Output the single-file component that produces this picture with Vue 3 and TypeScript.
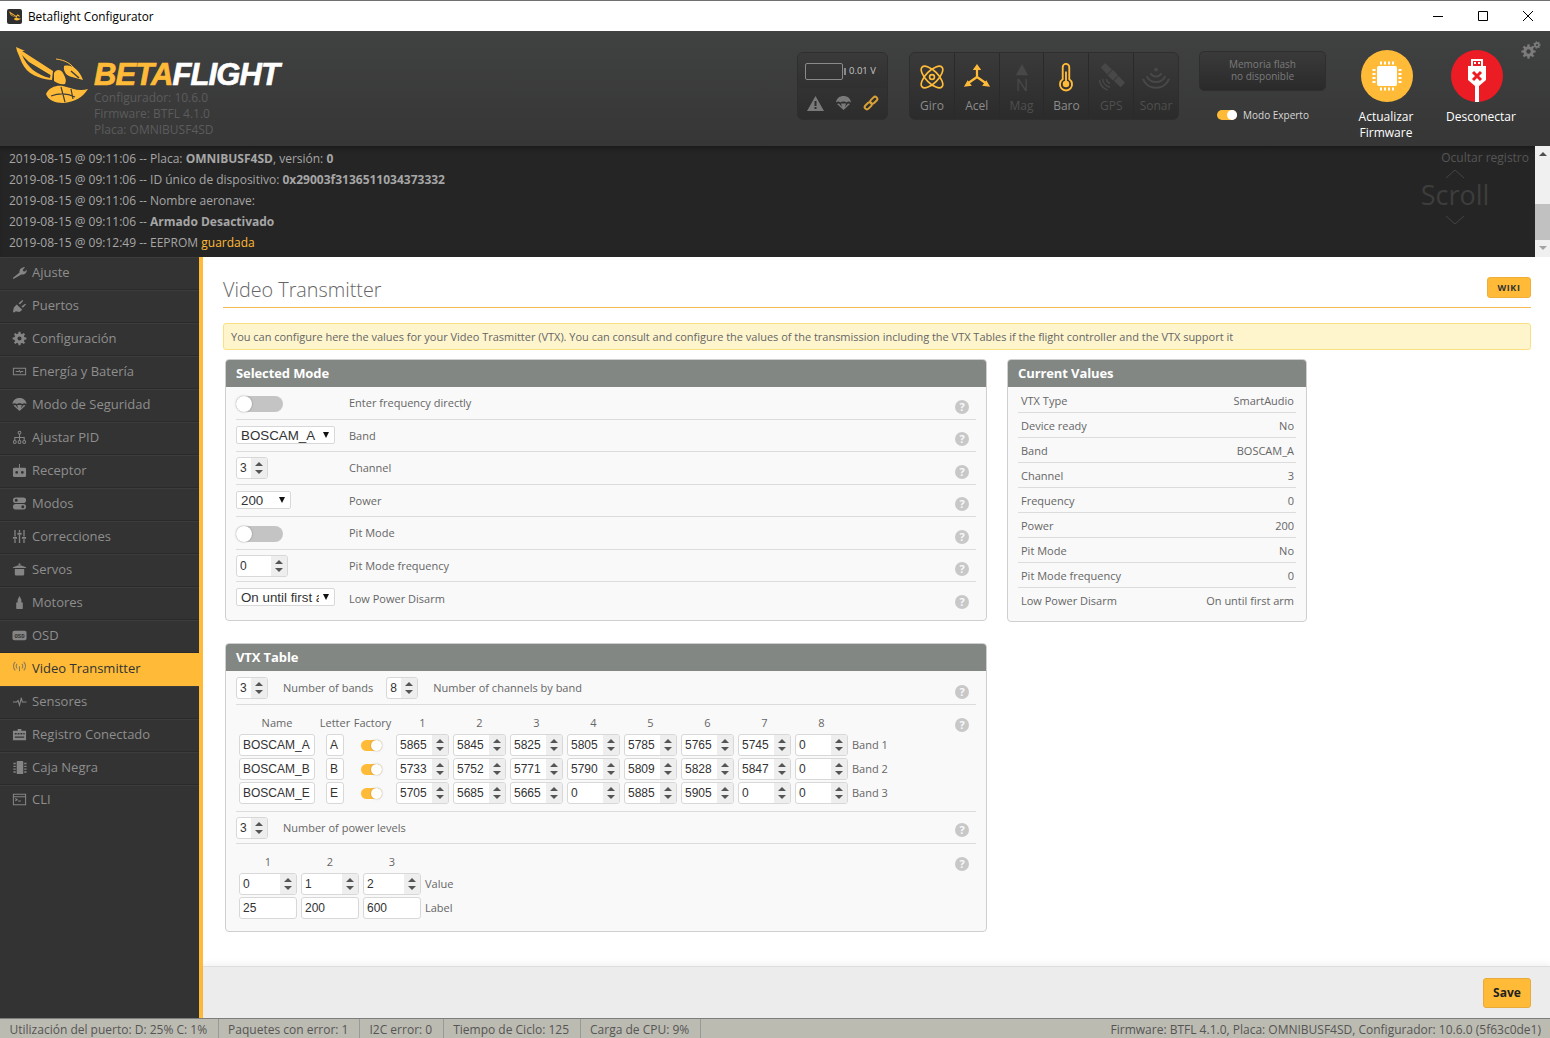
<template>
  <div class="app">
    <!-- window chrome -->
    <div class="titlebar">
      <span class="app-ico">
        <svg viewBox="14 45 74 58" width="12" height="10"><path :d="wingPath" fill="#ffbb38" fill-rule="evenodd" /><path :d="bodyPath" fill="#ffbb38" /></svg>
      </span>
      <span class="app-name">Betaflight Configurator</span>
      <div class="win-btns">
        <svg width="10" height="10" viewBox="0 0 10 10"><path d="M0 5.5h10" stroke="#000" /></svg>
        <svg width="10" height="10" viewBox="0 0 10 10"><path d="M.5.5h9v9h-9z" fill="none" stroke="#000" /></svg>
        <svg width="10" height="10" viewBox="0 0 10 10"><path d="M0 0l10 10M10 0L0 10" stroke="#000" /></svg>
      </div>
    </div>

    <header class="head">
      <div class="brand">
        <svg class="logo" viewBox="14 45 74 58">
          <path :d="wingPath" fill="#ffbb38" fill-rule="evenodd" />
          <path d="M30 61L50 73" stroke="#ffbb38" stroke-width="1.2" />
          <path :d="bodyPath" fill="#ffbb38" />
          <path d="M55 58C64 59 71 63 74 69" fill="none" stroke="#ffbb38" />
          <path d="M50 95C58 92 66 92 74 96M60 86L64 101M70 88L72 98" fill="none" stroke="#3c3d3d" stroke-width="1.2" />
          <path d="M70 70L78 77" stroke="#3c3d3d" stroke-width="1.5" />
        </svg>
        <div class="brand-txt">
          <div class="wordmark"><span class="beta">BETA</span>FLIGHT</div>
          <div class="ver">Configurador: 10.6.0</div>
          <div class="ver">Firmware: BTFL 4.1.0</div>
          <div class="ver">Placa: OMNIBUSF4SD</div>
        </div>
      </div>

      <div class="battery">
        <div class="bat-top">
          <span class="bat-cell"></span>
          <span class="bat-volt">0.01 V</span>
        </div>
        <div class="bat-bot">
          <svg width="17" height="15" viewBox="0 0 17 15"><path d="M8.5 0L17 15H0ZM7.5 5v5h2V5ZM7.5 11v2h2v-2Z" fill="#7a7a7a" fill-rule="evenodd" /></svg>
          <svg width="17" height="16" viewBox="0 0 16 16"><path :d="icons.gem" fill="#7a7a7a" /></svg>
          <svg width="16" height="16" viewBox="0 0 16 16"><g fill="none" stroke="#d9a036" stroke-width="2"><rect x="-4" y="-2.2" width="8" height="4.4" rx="2.2" transform="translate(5.2 10.8) rotate(-45)" /><rect x="-4" y="-2.2" width="8" height="4.4" rx="2.2" transform="translate(10.8 5.2) rotate(-45)" /></g></svg>
        </div>
      </div>

      <div class="sensors">
        <div class="sensor on">
          <svg viewBox="0 0 30 30"><g fill="none" stroke="currentColor" stroke-width="1.8"><ellipse cx="15" cy="15" rx="15" ry="6.5" transform="rotate(45 15 15)" /><ellipse cx="15" cy="15" rx="15" ry="6.5" transform="rotate(-45 15 15)" /><circle cx="15" cy="15" r="2.6" /></g></svg>
          <span>Giro</span>
        </div>
        <div class="sensor on">
          <svg viewBox="0 0 30 30"><path d="M15 15V5M15 15L5 22M15 15L25 22" fill="none" stroke="currentColor" stroke-width="2.4" /><path d="M15 1l4.5 6.5h-9zM1 25.5l4-7 4.5 6zM29 25.5l-8.5-1 4.5-6z" fill="currentColor" /></svg>
          <span>Acel</span>
        </div>
        <div class="sensor">
          <svg viewBox="0 0 30 30"><path d="M15 1l6.5 12h-13z" fill="currentColor" /><text x="15" y="30" text-anchor="middle" class="mag-n">N</text></svg>
          <span>Mag</span>
        </div>
        <div class="sensor on">
          <svg viewBox="0 0 30 30"><path d="M11.5 4.5a3.5 3.5 0 0 1 7 0v13a6.5 6.5 0 1 1-7 0z" fill="none" stroke="currentColor" stroke-width="2" /><circle cx="15" cy="22.5" r="3.5" fill="currentColor" /><path d="M15 9v12" stroke="currentColor" stroke-width="2" /></svg>
          <span>Baro</span>
        </div>
        <div class="sensor">
          <svg viewBox="0 0 30 30"><g fill="currentColor" transform="rotate(45 17 13)"><rect x="13" y="9" width="8" height="8" /><rect x="2" y="9.5" width="10" height="7" /><rect x="22" y="9.5" width="10" height="7" /></g><path d="M10 17a6 6 0 0 0 4 5M6 17a10 10 0 0 0 8 9M2.5 18a14 14 0 0 0 9 11" fill="none" stroke="currentColor" stroke-width="1.5" /></svg>
          <span>GPS</span>
        </div>
        <div class="sensor">
          <svg viewBox="0 0 30 30"><circle cx="15" cy="7" r="2" fill="currentColor" /><path d="M9 11a7 7 0 0 0 12 0M5 14a11 11 0 0 0 20 0M1 17a15 15 0 0 0 28 0" fill="none" stroke="currentColor" stroke-width="2.2" /></svg>
          <span>Sonar</span>
        </div>
      </div>

      <div class="flash-col">
        <div class="flash">Memoria flash<br />no disponible</div>
        <div class="expert">
          <span class="tgl-on"><i></i></span>
          <span>Modo Experto</span>
        </div>
      </div>

      <div class="round-btn">
        <span class="circle fw">
          <svg width="36" height="36" viewBox="0 0 36 36"><rect x="8" y="8" width="20" height="20" rx="2" fill="#fff" /><path d="M12 3.5v3M16 3.5v3M20 3.5v3M24 3.5v3M12 29.5v3M16 29.5v3M20 29.5v3M24 29.5v3M3.5 12h3M3.5 16h3M3.5 20h3M3.5 24h3M29.5 12h3M29.5 16h3M29.5 20h3M29.5 24h3" stroke="#fff" stroke-width="2" /></svg>
        </span>
        <span class="round-lbl">Actualizar<br />Firmware</span>
      </div>
      <div class="round-btn disc">
        <span class="circle off">
          <svg width="52" height="52" viewBox="0 0 52 52"><path d="M20 9h12v7h3v14l-7 6v16h-4V36l-7-6V16h3zM22 11v5h8v-5zM23 12h2v2h-2zM27 12h2v2h-2z" fill="#fff" fill-rule="evenodd" /><path d="M22 22l8 8M30 22l-8 8" stroke="#ec1c24" stroke-width="3" /></svg>
        </span>
        <span class="round-lbl">Desconectar</span>
      </div>
      <svg class="cog" width="20" height="18" viewBox="0 0 20 18">
        <path :d="gearPath(7.5, 10.5, 7.2, 5.2, 8, 2.2)" fill="#7b7b7b" fill-rule="evenodd" />
        <path :d="gearPath(16, 4, 3.8, 2.8, 7, 1.1)" fill="#7b7b7b" fill-rule="evenodd" />
      </svg>
    </header>

    <section class="log">
      <div class="log-lines">
        <div>2019-08-15 @ 09:11:06 -- Placa: <b>OMNIBUSF4SD</b>, versión: <b>0</b></div>
        <div>2019-08-15 @ 09:11:06 -- ID único de dispositivo: <b>0x29003f3136511034373332</b></div>
        <div>2019-08-15 @ 09:11:06 -- Nombre aeronave:</div>
        <div>2019-08-15 @ 09:11:06 -- <b>Armado Desactivado</b></div>
        <div>2019-08-15 @ 09:12:49 -- EEPROM <span class="saved">guardada</span></div>
      </div>
      <div class="log-side">
        <div class="hide-log">Ocultar registro</div>
        <div class="scroll-hint">
          <svg width="20" height="10" viewBox="0 0 20 10"><path d="M1 9l9-8 9 8" fill="none" stroke="#444" /></svg>
          <div class="scroll-word">Scroll</div>
          <svg width="20" height="10" viewBox="0 0 20 10"><path d="M1 1l9 8 9-8" fill="none" stroke="#444" /></svg>
        </div>
      </div>
      <div class="scrollbar">
        <i class="sb-up"></i>
        <span class="sb-thumb"></span>
        <i class="sb-down"></i>
      </div>
    </section>

    <div class="main">
      <nav class="side">
        <div v-for="m in menu" :key="m.label" class="nav-item" :class="{ active: m.label === 'Video Transmitter' }">
          <svg class="nav-ico" viewBox="0 0 16 16">
            <template v-if="m.label === 'OSD'">
              <rect x="0.5" y="3" width="15" height="10" rx="2" fill="currentColor" />
              <text x="8" y="10.3" text-anchor="middle" class="osd-txt">OSD</text>
            </template>
            <path v-else-if="m.stroke" :d="m.d" fill="none" stroke="currentColor" stroke-width="1.1" />
            <path v-else :d="m.d" fill="currentColor" fill-rule="evenodd" />
          </svg>
          <span>{{ m.label }}</span>
        </div>
      </nav>

      <div class="page">
        <div class="content">
          <div class="tab-head">
            <h1>Video Transmitter</h1>
            <span class="wiki">WIKI</span>
          </div>
          <div class="note">You can configure here the values for your Video Trasmitter (VTX). You can consult and configure the values of the transmission including the VTX Tables if the flight controller and the VTX support it</div>

          <div class="columns">
            <div class="col-left">
              <div class="panel">
                <div class="panel-head">Selected Mode</div>
                <div class="mode-row">
                  <div class="ctl"><span class="tgl-off"><i></i></span></div>
                  <span class="lbl">Enter frequency directly</span>
                  <span class="help">?</span>
                </div>
                <div class="mode-row">
                  <div class="ctl"><div class="sel w99"><span>BOSCAM_A</span><i></i></div></div>
                  <span class="lbl">Band</span>
                  <span class="help">?</span>
                </div>
                <div class="mode-row">
                  <div class="ctl"><div class="num w32"><span>3</span><b class="spin"></b></div></div>
                  <span class="lbl">Channel</span>
                  <span class="help">?</span>
                </div>
                <div class="mode-row">
                  <div class="ctl"><div class="sel w55"><span>200</span><i></i></div></div>
                  <span class="lbl">Power</span>
                  <span class="help">?</span>
                </div>
                <div class="mode-row">
                  <div class="ctl"><span class="tgl-off"><i></i></span></div>
                  <span class="lbl">Pit Mode</span>
                  <span class="help">?</span>
                </div>
                <div class="mode-row">
                  <div class="ctl"><div class="num w52"><span>0</span><b class="spin"></b></div></div>
                  <span class="lbl">Pit Mode frequency</span>
                  <span class="help">?</span>
                </div>
                <div class="mode-row last">
                  <div class="ctl"><div class="sel w99"><span>On until first arm</span><i></i></div></div>
                  <span class="lbl">Low Power Disarm</span>
                  <span class="help">?</span>
                </div>
              </div>

              <div class="panel">
                <div class="panel-head">VTX Table</div>
                <div class="vtx-top">
                  <div class="num w32"><span>3</span><b class="spin"></b></div>
                  <span class="lbl wide">Number of bands</span>
                  <div class="num w32"><span>8</span><b class="spin"></b></div>
                  <span class="lbl wide">Number of channels by band</span>
                  <span class="help">?</span>
                </div>
                <div class="vtx-mid">
                  <div class="bands">
                    <span class="hc name">Name</span>
                    <span class="hc letter">Letter</span>
                    <span class="hc fact">Factory</span>
                    <span v-for="c in 8" :key="c" class="hc ch">{{ c }}</span>
                    <span></span>
                    <template v-for="(b, i) in bands" :key="b.name">
                      <div class="txt name">{{ b.name }}</div>
                      <div class="txt letter">{{ b.letter }}</div>
                      <span class="tgl-mini"><i></i></span>
                      <div v-for="(f, j) in b.freqs" :key="j" class="num ch"><span>{{ f }}</span><b class="spin"></b></div>
                      <span class="lbl">Band {{ i + 1 }}</span>
                    </template>
                  </div>
                  <span class="help top">?</span>
                </div>
                <div class="vtx-levels">
                  <div class="num w32"><span>3</span><b class="spin"></b></div>
                  <span class="lbl wide">Number of power levels</span>
                  <span class="help low">?</span>
                </div>
                <div class="vtx-power">
                  <div class="powers">
                    <span v-for="c in 3" :key="c" class="hc pw">{{ c }}</span>
                    <span></span>
                    <div v-for="v in 3" :key="v" class="num pw"><span>{{ v - 1 }}</span><b class="spin"></b></div>
                    <span class="lbl">Value</span>
                    <div v-for="l in powerLabels" :key="l" class="txt pw">{{ l }}</div>
                    <span class="lbl">Label</span>
                  </div>
                  <span class="help top">?</span>
                </div>
              </div>
            </div>

            <div class="panel current">
              <div class="panel-head">Current Values</div>
              <div class="cur-list">
                <div v-for="r in current" :key="r[0]" class="cur-row">
                  <span>{{ r[0] }}</span>
                  <span>{{ r[1] }}</span>
                </div>
              </div>
            </div>
          </div>
        </div>
        <div class="toolbar">
          <span class="save">Save</span>
        </div>
      </div>
    </div>

    <footer class="status">
      <span class="st">Utilización del puerto: D: 25% C: 1%</span>
      <span class="st">Paquetes con error: 1</span>
      <span class="st">I2C error: 0</span>
      <span class="st">Tiempo de Ciclo: 125</span>
      <span class="st">Carga de CPU: 9%</span>
      <span class="st-right">Firmware: BTFL 4.1.0, Placa: OMNIBUSF4SD, Configurador: 10.6.0 (5f63c0de1)</span>
    </footer>
  </div>
</template>

<script setup lang="ts">
// builds a gear outline, hole is wound into the same path for evenodd
function gearPath(cx: number, cy: number, outer: number, inner: number, teeth: number, hole: number): string {
  const pts: string[] = [];
  const step = (Math.PI * 2) / teeth;
  for (let i = 0; i < teeth; i++) {
    const a = i * step;
    const spots: Array<[number, number]> = [
      [a - step * 0.32, inner],
      [a - step * 0.18, outer],
      [a + step * 0.18, outer],
      [a + step * 0.32, inner],
    ];
    for (const [ang, r] of spots) {
      pts.push(`${(cx + Math.cos(ang) * r).toFixed(2)} ${(cy + Math.sin(ang) * r).toFixed(2)}`);
    }
  }
  return `M${pts.join('L')}Z${circle(cx, cy, hole)}`;
}

function circle(x: number, y: number, r: number): string {
  return `M${x - r} ${y}a${r} ${r} 0 1 0 ${r * 2} 0a${r} ${r} 0 1 0 ${-r * 2} 0Z`;
}

const wingPath =
  'M15 46L24 50L21 50L52 70L51 79C38 78 26 73 21 62L16 50ZM21 54C26 66 36 74 49 77L49.5 74L28 61Z';
const bodyPath =
  'M63 65C70 63 78 68 82 79L71 76C66 75 62 71 63 65ZM53 72C55 68 60 68 62 72C64 76 66 79 64 83C60 84 56 82 53 80ZM45 93C48 86 56 84 62 85C70 87 78 91 87 88C82 96 74 101 62 102C54 102 47 99 45 93Z';

const icons = {
  gem: 'M.5 7.5C1 3 4.5 1 8 1s7 2 7.5 6.5C14 6.3 12.3 6.3 11 7.5 9.7 6.3 6.3 6.3 5 7.5 3.7 6.3 2 6.3 .5 7.5ZM1.5 9L8 15l6.5-6-2-.5L9.5 12l1-3.5h-5l1 3.5-3-3.5Z',
};

interface MenuItem {
  label: string;
  d: string;
  stroke?: boolean;
}

const menu: MenuItem[] = [
  { label: 'Ajuste', d: 'M1.5 15L.8 13.8 8 8C7.6 5 10 2.2 14 2.5L11.5 5 12 6.6 13.8 7 15.8 4.8C16 8.5 13 10.8 10 10Z' },
  { label: 'Puertos', d: 'M1 15l1-5 3-3 6 5.5L8 15l-4-1-1.5 1.5ZM7 5.5L11 2l1 1-3.5 4ZM10 9l4-3 1 1-3.5 3.5Z' },
  { label: 'Configuración', d: gearPath(8, 8, 7.4, 5.4, 8, 2.2) },
  { label: 'Energía y Batería', d: 'M1.5 4.5h13v7h-13zM4 8h3l1-1 1 2 1-1h2', stroke: true },
  { label: 'Modo de Seguridad', d: icons.gem },
  { label: 'Ajustar PID', d: `M8 4.3V8M3 11V8h10v3M8 8v3${circle(8, 2.8, 1.5)}${circle(3, 12.8, 1.5)}${circle(8, 12.8, 1.5)}${circle(13, 12.8, 1.5)}`, stroke: true },
  { label: 'Receptor', d: `M7.5 1h1v4h-1zM2.5 5h11A1.5 1.5 0 0 1 15 6.5v7a1.5 1.5 0 0 1-1.5 1.5h-11A1.5 1.5 0 0 1 1 13.5v-7A1.5 1.5 0 0 1 2.5 5Z${circle(5, 10, 1.5)}${circle(11, 10, 1.5)}` },
  { label: 'Modos', d: `M4 1.5h8a3 3 0 0 1 0 6H4a3 3 0 0 1 0-6Z${circle(4.5, 4.5, 1.6)}M4 8.5h8a3 3 0 0 1 0 6H4a3 3 0 0 1 0-6Z${circle(11.5, 11.5, 1.6)}` },
  { label: 'Correcciones', d: 'M2.5 1h1.4v7H2.5zM1 8.5h4.4v2H1zM2.5 11h1.4v4H2.5zM7.3 1h1.4v2.5H7.3zM5.8 4h4.4v2H5.8zM7.3 6.5h1.4V15H7.3zM12.1 1h1.4v7h-1.4zM10.6 8.5H15v2h-4.4zM12.1 11h1.4v4h-1.4z' },
  { label: 'Servos', d: 'M7 1.5h2v2H7zM1 5.5L6 3.8h4l5 1.7v1H1zM3 7.5h10V13a1.5 1.5 0 0 1-1.5 1.5h-7A1.5 1.5 0 0 1 3 13Z' },
  { label: 'Motores', d: 'M8 1l2 4v3h1.5v6a1 1 0 0 1-1 1h-5a1 1 0 0 1-1-1V8H6V5Z' },
  { label: 'OSD', d: '' },
  { label: 'Video Transmitter', d: 'M8 5.5V11M5.5 3a3.5 3.5 0 0 0 0 5M10.5 3a3.5 3.5 0 0 1 0 5M3.5 1a6.3 6.3 0 0 0 0 9M12.5 1a6.3 6.3 0 0 1 0 9', stroke: true },
  { label: 'Sensores', d: 'M1 8.5h4l1.5-1.5 1.5 5 2-8 1 4.5h4.5', stroke: true },
  { label: 'Registro Conectado', d: 'M6 2h4v2H6zM1 4h14v10H1zM3 6.5h2V8H3zM6 6.5h2V8H6zM9 6.5h2V8H9zM12 6.5h1.5V8H12zM3 10h10v1.5H3z' },
  { label: 'Caja Negra', d: 'M6 1h5a1 1 0 0 1 1 1v12a1 1 0 0 1-1 1H6a1 1 0 0 1-1-1V2a1 1 0 0 1 1-1ZM1.5 3H4v1.5H1.5zM1.5 6H4v1.5H1.5zM1.5 9H4v1.5H1.5zM1.5 12H4v1.5H1.5zM13 3h2.5v1.5H13zM13 6h2.5v1.5H13zM13 9h2.5v1.5H13zM13 12h2.5v1.5H13z' },
  { label: 'CLI', d: 'M1.5 2.5h13v11h-13zM1.5 5h13M3.5 7l2 1.2-2 1.2M6.5 9.5h3', stroke: true },
];

const bands = [
  { name: 'BOSCAM_A', letter: 'A', freqs: [5865, 5845, 5825, 5805, 5785, 5765, 5745, 0] },
  { name: 'BOSCAM_B', letter: 'B', freqs: [5733, 5752, 5771, 5790, 5809, 5828, 5847, 0] },
  { name: 'BOSCAM_E', letter: 'E', freqs: [5705, 5685, 5665, 0, 5885, 5905, 0, 0] },
];

const powerLabels = [25, 200, 600];

const current: Array<[string, string]> = [
  ['VTX Type', 'SmartAudio'],
  ['Device ready', 'No'],
  ['Band', 'BOSCAM_A'],
  ['Channel', '3'],
  ['Frequency', '0'],
  ['Power', '200'],
  ['Pit Mode', 'No'],
  ['Pit Mode frequency', '0'],
  ['Low Power Disarm', 'On until first arm'],
];
</script>

<style>
html, body { margin: 0; overflow: hidden; }
</style>

<style scoped>
.app {
  width: 1550px;
  height: 1038px;
  display: flex;
  flex-direction: column;
  font-family: "Open Sans", "Noto Sans", sans-serif;
  background: #fff;
  overflow: hidden;
}

/* window chrome */
.titlebar {
  height: 31px;
  box-sizing: border-box;
  border-top: 1px solid #707070;
  display: flex;
  align-items: center;
  padding-left: 7px;
  background: #fff;
  flex-shrink: 0;
}
.app-ico {
  width: 15px;
  height: 15px;
  background: #2f2f2f;
  border-radius: 2px;
  display: flex;
  align-items: center;
  justify-content: center;
}
.app-name { font-size: 11.8px; margin-left: 6px; color: #000; }
.win-btns { margin-left: auto; margin-right: 17px; display: flex; gap: 35px; }

/* header */
.head {
  height: 115px;
  flex-shrink: 0;
  background: linear-gradient(#404141, #363636);
  display: flex;
  align-items: flex-start;
}
.brand { display: flex; margin-left: 15px; width: 782px; }
.logo { width: 74px; height: 58px; margin-top: 15px; }
.brand-txt { margin-left: 5px; margin-top: 28px; }
.wordmark {
  font-family: "Liberation Sans", sans-serif;
  font-weight: 700;
  font-style: italic;
  font-size: 31px;
  line-height: 31px;
  letter-spacing: -0.9px;
  margin-bottom: 0;
  color: #fff;
  -webkit-text-stroke: 0.7px currentColor;
}
.beta { color: #ffbb38; }
.ver { font-size: 12px; line-height: 16px; color: #5c5c5c; }

.battery {
  width: 91px;
  height: 68px;
  margin-top: 21px;
  box-sizing: border-box;
  border: 1px solid #2e2e2e;
  border-radius: 6px;
  overflow: hidden;
  background: linear-gradient(#3a3a3a, #2c2c2c);
}
.bat-top {
  height: 35px;
  display: flex;
  align-items: center;
  padding-left: 7px;
  background: linear-gradient(#3a3a3a, #303030);
}
.bat-cell {
  width: 36px;
  height: 15px;
  margin-top: 1px;
  border: 1.5px solid #8a8a8a;
  border-radius: 2px;
  position: relative;
}
.bat-cell::after {
  content: '';
  position: absolute;
  right: -3.5px;
  top: 4px;
  width: 2px;
  height: 7px;
  background: #8a8a8a;
}
.bat-volt { font-size: 9.5px; color: #c4c4c4; margin-left: 6px; }
.bat-bot {
  display: flex;
  align-items: center;
  gap: 11px;
  padding: 7px 0 0 9px;
}

.sensors {
  margin-left: 21px;
  margin-top: 21px;
  height: 68px;
  width: 270px;
  box-sizing: border-box;
  display: flex;
  border: 1px solid #2e2e2e;
  border-radius: 6px;
  overflow: hidden;
  background: linear-gradient(#3a3a3a, #2b2b2b);
}
.sensor {
  flex: 1;
  border-right: 1px solid #2a2a2a;
  display: flex;
  flex-direction: column;
  align-items: center;
  color: #484848;
  font-size: 12px;
}
.sensor:last-child { border-right: none; }
.sensor svg { width: 28px; height: 28px; margin-top: 10px; overflow: visible; }
.sensor span { margin-top: 7px; line-height: 16px; color: #4f4f4f; }
.sensor.on { color: #ffbb38; }
.sensor.on span { color: #8c8c8c; }
.mag-n { font-family: "Open Sans", sans-serif; font-size: 18px; fill: currentColor; }

.flash-col { margin-left: 20px; width: 127px; margin-top: 20px; }
.flash {
  height: 40px;
  box-sizing: border-box;
  border: 1px solid #2e2e2e;
  border-radius: 5px;
  background: linear-gradient(#3a3a3a, #2a2a2a);
  font-size: 10px;
  line-height: 12px;
  color: #7b7b7b;
  text-align: center;
  padding-top: 6px;
}
.expert {
  display: flex;
  align-items: center;
  gap: 6px;
  margin: 17px 0 0 18px;
  font-size: 10px;
  color: #d8d8d8;
}
.tgl-on {
  width: 20px;
  height: 10px;
  background: #ffbb38;
  border-radius: 5px;
  display: flex;
  justify-content: flex-end;
}
.tgl-on i {
  width: 10px;
  height: 10px;
  background: #fff;
  border-radius: 50%;
}

.round-btn {
  width: 70px;
  margin-left: 25px;
  margin-top: 19px;
  display: flex;
  flex-direction: column;
  align-items: center;
}
.round-btn.disc { align-items: flex-start; }
.circle {
  width: 52px;
  height: 52px;
  border-radius: 50%;
  display: flex;
  align-items: center;
  justify-content: center;
}
.circle.fw { background: #ffbb38; margin-left: 2px; }
.circle.off { background: #ec1c24; margin-left: 5px; }
.round-lbl {
  margin-top: 7px;
  font-size: 12px;
  line-height: 16px;
  color: #fff;
  text-align: center;
  white-space: nowrap;
}
.cog { margin: 10px 0 0 5px; }

/* log */
.log {
  height: 111px;
  flex-shrink: 0;
  background: #252525;
  box-shadow: inset 0 5px 5px -3px rgba(0, 0, 0, 0.35);
  display: flex;
  font-size: 12px;
  color: #a6a6a6;
}
.log-lines { flex: 1; padding: 2px 0 0 9px; line-height: 21px; }
.log-lines b { font-weight: 700; color: #a6a6a6; }
.saved { color: #ffbb38; }
.log-side { width: 113px; }
.hide-log { text-align: right; padding-right: 6px; margin-top: 4px; line-height: 16px; color: #555; }
.scroll-hint {
  width: 66px;
  display: flex;
  flex-direction: column;
  align-items: center;
  margin-top: 3px;
}
.scroll-word { font-size: 27px; line-height: 32px; color: #3d3d3d; }
.scroll-hint svg:last-child { margin-top: 4px; }
.scrollbar {
  width: 15px;
  background: #f0f0f0;
  display: flex;
  flex-direction: column;
  align-items: center;
}
.sb-up, .sb-down { width: 0; height: 0; border-left: 4px solid transparent; border-right: 4px solid transparent; }
.sb-up { border-bottom: 4px solid #505050; margin-top: 6px; }
.sb-down { border-top: 4px solid #a3a3a3; margin-top: 6px; }
.sb-thumb { width: 15px; height: 36px; background: #c1c1c1; margin-top: 48px; }

/* body */
.main { flex: 1; min-height: 0; display: flex; }
.side {
  width: 199px;
  box-sizing: border-box;
  background: #333;
  flex-shrink: 0;
}
.nav-item {
  height: 33px;
  box-sizing: border-box;
  border-bottom: 1px solid #2a2a2a;
  border-top: 1px solid #3c3c3c;
  display: flex;
  align-items: center;
  padding-left: 12px;
  padding-bottom: 3px;
  font-size: 13px;
  color: #8e8e8e;
}
.nav-item:last-child { height: 32px; border-bottom: none; padding-bottom: 5px; }
.nav-item.active { background: #ffbb38; color: #333; border-color: #ffbb38; }
.nav-item.active .nav-ico { color: #8a7b55; }
.nav-ico { width: 15px; height: 15px; margin-right: 5px; color: #858585; flex-shrink: 0; }
.osd-txt { font-family: "Liberation Mono", monospace; font-size: 6px; font-weight: 700; fill: #333; }

.page {
  flex: 1;
  min-width: 0;
  border-left: 4px solid #ffbb38;
  display: flex;
  flex-direction: column;
}
.content { flex: 1; min-height: 0; padding: 0 19px 0 20px; background: #fff; }
.tab-head {
  height: 51px;
  box-sizing: border-box;
  display: flex;
  align-items: center;
  justify-content: space-between;
  border-bottom: 1px solid #f5b94f;
  padding-top: 15px;
  padding-bottom: 1px;
}
.tab-head h1 {
  margin: 0;
  font-size: 19.8px;
  font-weight: 300;
  color: #666;
}
.wiki {
  width: 44px;
  height: 21px;
  margin-top: -3px;
  background: #ffbb38;
  border: 1px solid #efb03a;
  box-sizing: border-box;
  border-radius: 3px;
  font-size: 9px;
  font-weight: 700;
  letter-spacing: 0.6px;
  color: #333;
  display: flex;
  align-items: center;
  justify-content: center;
}
.note {
  margin-top: 15px;
  height: 27px;
  box-sizing: border-box;
  background: #fef5cd;
  border: 1px solid #fbe083;
  border-radius: 3px;
  padding-left: 7px;
  font-size: 11px;
  letter-spacing: -0.015px;
  line-height: 25px;
  color: #666;
  white-space: nowrap;
}
.columns { display: flex; align-items: flex-start; gap: 20px; margin: 9px 0 0 2px; }
.col-left { width: 762px; display: flex; flex-direction: column; gap: 22.5px; }

.panel {
  box-sizing: border-box;
  background: #f9f9f9;
  border: 1px solid #cfcfcf;
  border-radius: 4px;
  overflow: hidden;
}
.panel-head {
  height: 27px;
  background: #828784;
  color: #fff;
  font-size: 13px;
  font-weight: 700;
  letter-spacing: -0.1px;
  line-height: 27px;
  padding-left: 10px;
}
.panel.current { width: 300px; }

.lbl { font-size: 11px; color: #666; white-space: nowrap; }
.lbl.wide { margin-left: 15px; }
.help {
  width: 14px;
  height: 14px;
  border-radius: 50%;
  background: #c8c8c8;
  color: #f9f9f9;
  font-size: 11px;
  font-weight: 700;
  line-height: 14px;
  text-align: center;
  margin-left: auto;
  margin-right: 7px;
  margin-top: 8px;
  flex-shrink: 0;
}
.help.top { align-self: flex-start; margin-top: 2px; }
.help.low { margin-top: 5px; }

.mode-row {
  height: 32.5px;
  box-sizing: border-box;
  margin: 0 10px;
  border-bottom: 1px solid #dcdcdc;
  display: flex;
  align-items: center;
}
.mode-row .num { margin-top: 1px; }
.mode-row.last { height: 37.5px; border-bottom: none; padding-bottom: 7px; }
.mode-row.last .lbl, .mode-row.last .help { position: relative; top: 1px; }
.ctl { width: 113px; flex-shrink: 0; display: flex; }

.tgl-off {
  width: 47px;
  height: 16px;
  margin-top: 3px;
  background: #c4c4c4;
  border-radius: 8px;
  display: block;
}
.tgl-off i {
  display: block;
  width: 16px;
  height: 16px;
  background: #fff;
  border-radius: 50%;
  box-shadow: 0 0 2px rgba(0, 0, 0, 0.35);
}

.sel {
  height: 18px;
  box-sizing: border-box;
  background: #fff;
  border: 1px solid #d8d8d8;
  border-radius: 2px;
  display: flex;
  align-items: center;
  padding-left: 4px;
  font-family: "Liberation Sans", sans-serif;
  font-size: 13.33px;
  color: #333;
  overflow: hidden;
}
.sel span { flex: 1; min-width: 0; overflow: hidden; white-space: nowrap; }
.sel i {
  width: 0;
  height: 0;
  border-left: 3.5px solid transparent;
  border-right: 3.5px solid transparent;
  border-top: 6px solid #111;
  margin: 0 5px 0 4px;
  flex-shrink: 0;
}
.w99 { width: 99px; }
.w55 { width: 55px; }

.num, .txt {
  height: 22px;
  box-sizing: border-box;
  background: #fff;
  border: 1px solid #d8d8d8;
  border-radius: 3px;
  font-family: "Liberation Sans", sans-serif;
  font-size: 12px;
  color: #333;
}
.num { display: flex; overflow: hidden; }
.num span { flex: 1; min-width: 0; padding-left: 3px; line-height: 20px; }
.txt { padding-left: 3px; line-height: 20px; }
.spin {
  width: 16px;
  background: #eee;
  display: flex;
  flex-direction: column;
  align-items: center;
  justify-content: center;
  gap: 4px;
  flex-shrink: 0;
}
.spin::before, .spin::after {
  content: '';
  width: 0;
  height: 0;
  border-left: 4px solid transparent;
  border-right: 4px solid transparent;
}
.spin::before { border-bottom: 4px solid #555; }
.spin::after { border-top: 4px solid #555; }
.w32 { width: 32px; flex-shrink: 0; }
.w52 { width: 52px; }

.vtx-top {
  height: 34px;
  box-sizing: border-box;
  margin: 0 10px;
  border-bottom: 1px solid #dcdcdc;
  display: flex;
  align-items: center;
}
.vtx-top .num { margin-top: 1px; }
.vtx-top .lbl + .num { margin-left: 13px; }
.vtx-mid {
  height: 107px;
  box-sizing: border-box;
  margin: 0 10px;
  padding: 11px 0 0 3px;
  border-bottom: 1px solid #dcdcdc;
  display: flex;
}
.bands {
  display: grid;
  grid-template-columns: 87px 35px 35px repeat(8, 57px) auto;
  grid-template-rows: 16px repeat(3, 22px);
  row-gap: 2px;
  align-items: center;
}
.bands .hc { height: 14px; line-height: 14px; align-self: start; }
.bands .lbl, .powers .lbl { padding-bottom: 2px; }
.hc {
  font-size: 11px;
  color: #666;
  display: flex;
  justify-content: center;
  white-space: nowrap;
}
.name { width: 76px; }
.letter { width: 18px; }
.fact { width: 23px; }
.ch { width: 53px; }
.tgl-mini {
  width: 21px;
  height: 11px;
  background: #ffbb38;
  border-radius: 6px;
  display: flex;
  justify-content: flex-end;
}
.tgl-mini i {
  width: 11px;
  height: 11px;
  background: #fff;
  border-radius: 50%;
  box-shadow: 0 0 2px rgba(0, 0, 0, 0.3);
}

.vtx-levels {
  height: 32px;
  box-sizing: border-box;
  margin: 0 10px;
  border-bottom: 1px solid #dcdcdc;
  display: flex;
  align-items: center;
}
.vtx-power {
  height: 87px;
  box-sizing: border-box;
  margin: 0 10px;
  padding: 11px 0 0 3px;
  display: flex;
}
.powers {
  display: grid;
  grid-template-columns: repeat(3, 62px) auto;
  grid-template-rows: 16px 22px 22px;
  row-gap: 2px;
  align-items: center;
}
.powers .hc { height: 14px; align-self: start; line-height: 14px; }
.pw { width: 58px; }

.cur-list { padding: 1px 10px 8px; }
.cur-row {
  height: 25px;
  box-sizing: border-box;
  padding: 0 2px 0 3px;
  border-bottom: 1px solid #dcdcdc;
  display: flex;
  align-items: center;
  justify-content: space-between;
  font-size: 11px;
  color: #666;
}
.cur-row:last-child { border-bottom: none; }

.toolbar {
  height: 52px;
  box-sizing: border-box;
  flex-shrink: 0;
  background: #ececec;
  border-top: 1px solid #dedede;
  box-shadow: 0 -3px 6px rgba(0, 0, 0, 0.05);
  display: flex;
  justify-content: flex-end;
  align-items: center;
  padding-right: 19px;
}
.save {
  width: 48px;
  height: 30px;
  box-sizing: border-box;
  background: #ffbb38;
  border: 1px solid #e8ab3a;
  border-radius: 3px;
  font-size: 12px;
  font-weight: 700;
  color: #222;
  display: flex;
  align-items: center;
  justify-content: center;
}

.status {
  height: 20px;
  box-sizing: border-box;
  flex-shrink: 0;
  background: #bcbbb1;
  border-top: 1px solid #7d7d7d;
  display: flex;
  align-items: center;
  font-size: 12px;
  color: #555;
  white-space: nowrap;
}
.st {
  padding: 1px 10.5px 0 9.5px;
  border-right: 1px solid #999;
  height: 100%;
  line-height: 19px;
  box-sizing: border-box;
}
.st-right { margin-left: auto; padding: 1px 9px 0 0; }
</style>
